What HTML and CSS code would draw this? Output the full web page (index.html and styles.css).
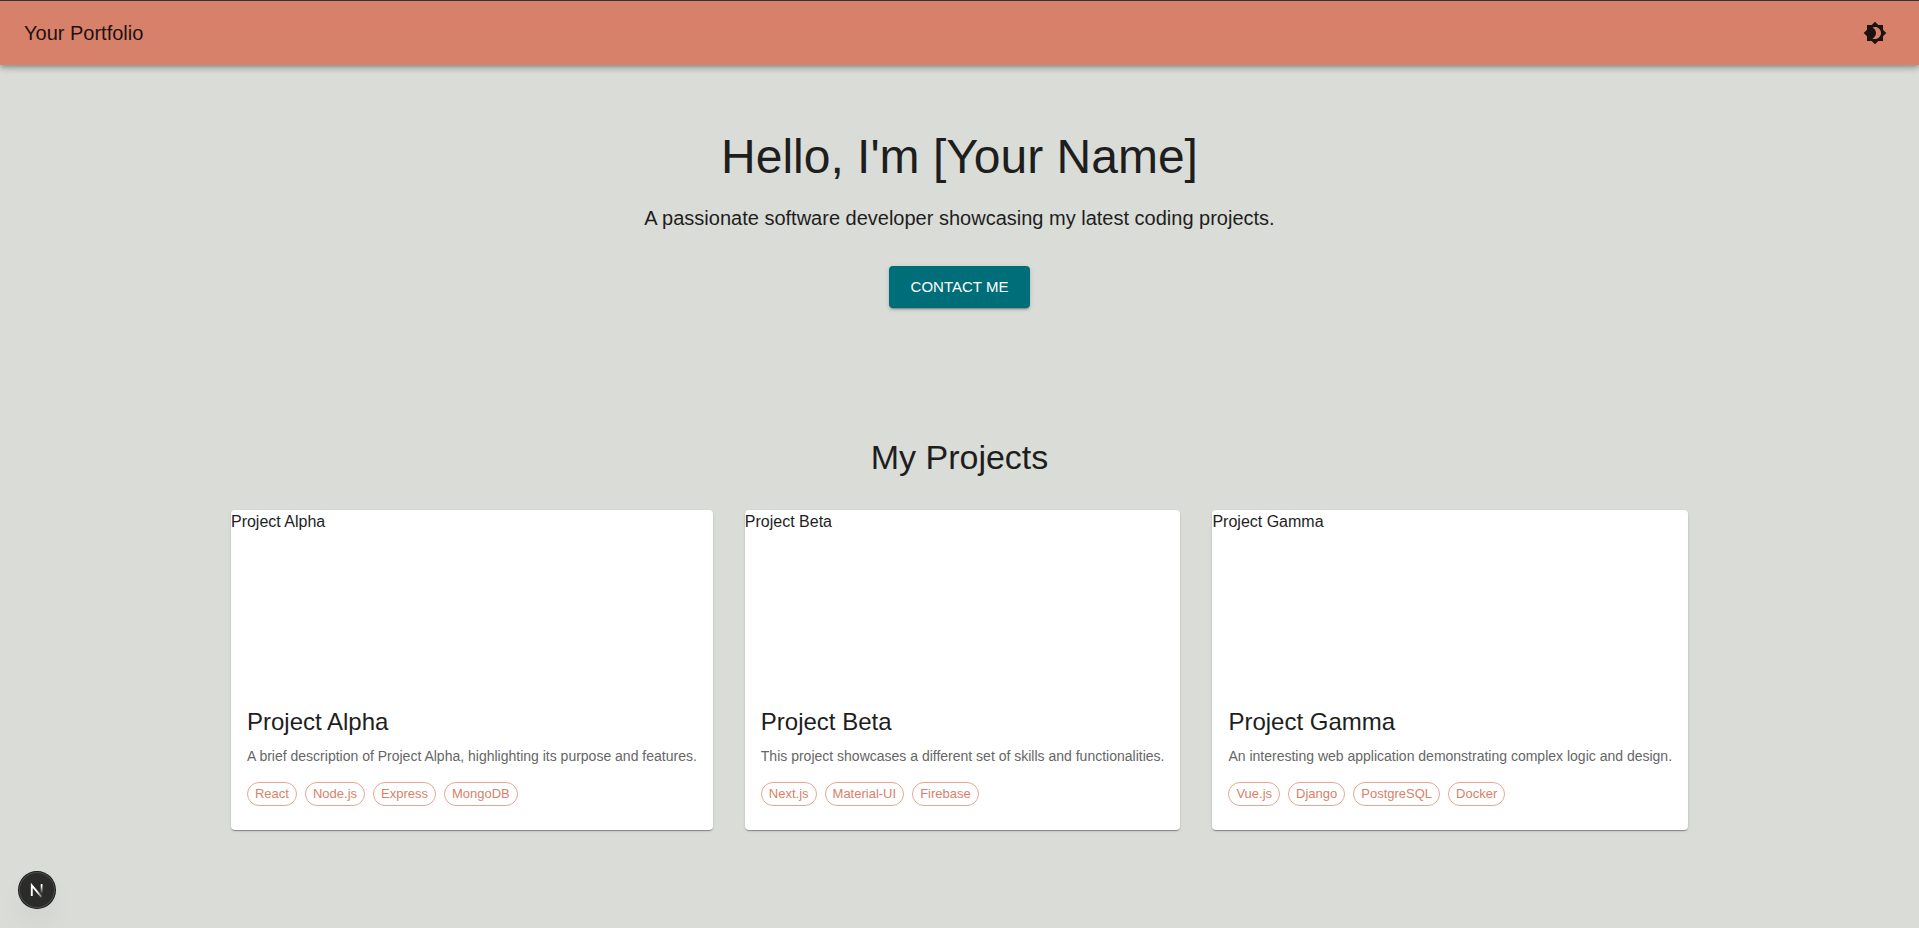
FILE: index.html
```html
<!DOCTYPE html>
<html lang="en">
<head>
<meta charset="utf-8">
<meta name="viewport" content="width=device-width, initial-scale=1">
<title>Your Portfolio</title>
<link rel="stylesheet" href="styles.css">
</head>
<body>
<header class="app-bar">
  <div class="brand">Your Portfolio</div>
  <button class="icon-button" type="button" aria-label="Toggle theme">
    <svg viewBox="0 0 24 24" width="24" height="24" aria-hidden="true"><path fill="currentColor" d="M20 8.69V4h-4.69L12 .69 8.69 4H4v4.69L.69 12 4 15.31V20h4.69L12 23.31 15.31 20H20v-4.69L23.31 12 20 8.69zM12 18c-.89 0-1.74-.2-2.5-.55C11.56 16.5 13 14.42 13 12s-1.44-4.5-3.5-5.45C10.26 6.2 11.11 6 12 6c3.31 0 6 2.69 6 6s-2.69 6-6 6z"/></svg>
  </button>
</header>
<main>
  <section class="hero">
    <h1 class="hero-title">Hello, I'm [Your Name]</h1>
    <p class="hero-text">A passionate software developer showcasing my latest coding projects.</p>
    <button class="contact" type="button">CONTACT ME</button>
  </section>
  <section class="projects">
    <h2 class="projects-title">My Projects</h2>
    <div class="cards">
      <article class="card">
        <div class="media">Project Alpha</div>
        <div class="content">
          <h3 class="card-title">Project Alpha</h3>
          <p class="card-text">A brief description of Project Alpha, highlighting its purpose and features.</p>
          <ul class="chips"><li class="chip">React</li><li class="chip">Node.js</li><li class="chip">Express</li><li class="chip">MongoDB</li></ul>
        </div>
      </article>
      <article class="card">
        <div class="media">Project Beta</div>
        <div class="content">
          <h3 class="card-title">Project Beta</h3>
          <p class="card-text">This project showcases a different set of skills and functionalities.</p>
          <ul class="chips"><li class="chip">Next.js</li><li class="chip">Material-UI</li><li class="chip">Firebase</li></ul>
        </div>
      </article>
      <article class="card">
        <div class="media">Project Gamma</div>
        <div class="content">
          <h3 class="card-title">Project Gamma</h3>
          <p class="card-text">An interesting web application demonstrating complex logic and design.</p>
          <ul class="chips"><li class="chip">Vue.js</li><li class="chip">Django</li><li class="chip">PostgreSQL</li><li class="chip">Docker</li></ul>
        </div>
      </article>
    </div>
  </section>
</main>
<button class="dev-badge" type="button" aria-label="Open Next.js Dev Tools">
  <svg viewBox="0 0 36 36" width="36" height="36" fill="none" aria-hidden="true">
    <defs>
      <linearGradient id="stem" x1="0" y1="12" x2="0" y2="22" gradientUnits="userSpaceOnUse"><stop offset="0.2" stop-color="#fff"/><stop offset="1" stop-color="#fff" stop-opacity="0"/></linearGradient>
      <linearGradient id="slash" x1="18" y1="19" x2="23" y2="25" gradientUnits="userSpaceOnUse"><stop stop-color="#fff"/><stop offset="1" stop-color="#fff" stop-opacity="0.3"/></linearGradient>
    </defs>
    <path d="M12.8 24V13.4l9.6 11.4" stroke="url(#slash)" stroke-width="1.9"/>
    <path d="M22.6 12v9.5" stroke="url(#stem)" stroke-width="1.8"/>
  </svg>
</button>
</body>
</html>
```

FILE: styles.css
```css
* { box-sizing: border-box; }

body {
  margin: 0;
  min-height: 100vh;
  border-top: 1px solid #33333a;
  background: #dadcd7;
  color: #1e1e1e;
  font: 16px/24px "Liberation Sans", Arial, sans-serif;
}

h1, h2, h3, p, ul { margin: 0; padding: 0; font-weight: 400; }
button { border: 0; font-family: inherit; cursor: pointer; }

.app-bar {
  position: relative;
  display: flex;
  align-items: center;
  justify-content: space-between;
  min-height: 64px;
  padding: 0 24px;
  background: #d8816a;
  color: #1e1210;
  box-shadow: 0 2px 4px -1px rgba(0, 0, 0, .2), 0 4px 5px rgba(0, 0, 0, .14), 0 1px 10px rgba(0, 0, 0, .12);
}
.brand { font-size: 20px; line-height: 32px; }
.icon-button { display: flex; padding: 8px; background: none; color: inherit; }

.hero {
  display: flex;
  flex-direction: column;
  align-items: center;
  padding: 64px 24px;
  text-align: center;
}
.hero-title { margin-bottom: 17px; font-size: 48px; line-height: 56px; }
.hero-text { margin-bottom: 32px; font-size: 20px; line-height: 32px; }
.contact {
  padding: 8px 22px;
  border-radius: 4px;
  background: #006e78;
  color: #fff;
  font-size: 15px;
  line-height: 26px;
  box-shadow: 0 3px 1px -2px rgba(0, 0, 0, .2), 0 2px 2px rgba(0, 0, 0, .14), 0 1px 5px rgba(0, 0, 0, .12);
}

.projects { padding: 64px 24px; }
.projects-title { margin-bottom: 32px; font-size: 34px; line-height: 42px; text-align: center; }
.cards { display: flex; flex-wrap: wrap; justify-content: center; gap: 32px; }
.card {
  overflow: hidden;
  border-radius: 4px;
  background: #fff;
  box-shadow: 0 2px 1px -1px rgba(0, 0, 0, .2), 0 1px 1px rgba(0, 0, 0, .14), 0 1px 3px rgba(0, 0, 0, .12);
}
.media { height: 180px; }
.content { padding: 16px 16px 24px; }
.card-title { margin-bottom: 8px; font-size: 24px; line-height: 32px; }
.card-text { margin-bottom: 16px; color: #666; font-size: 14px; line-height: 20px; }
.chips { display: flex; flex-wrap: wrap; gap: 8px; list-style: none; }
.chip {
  padding: 0 7px;
  border: 1px solid rgba(216, 129, 106, .7);
  border-radius: 12px;
  color: #d8816a;
  font-size: 13px;
  line-height: 22px;
}

.dev-badge {
  position: fixed;
  bottom: 20px;
  left: 19px;
  display: flex;
  padding: 0;
  border-radius: 50%;
  background: #2b2b2a;
  box-shadow: 0 0 0 1px #171717, inset 0 0 0 1px #4b4b4b, 0 16px 32px -8px rgba(0, 0, 0, .14);
}
```
